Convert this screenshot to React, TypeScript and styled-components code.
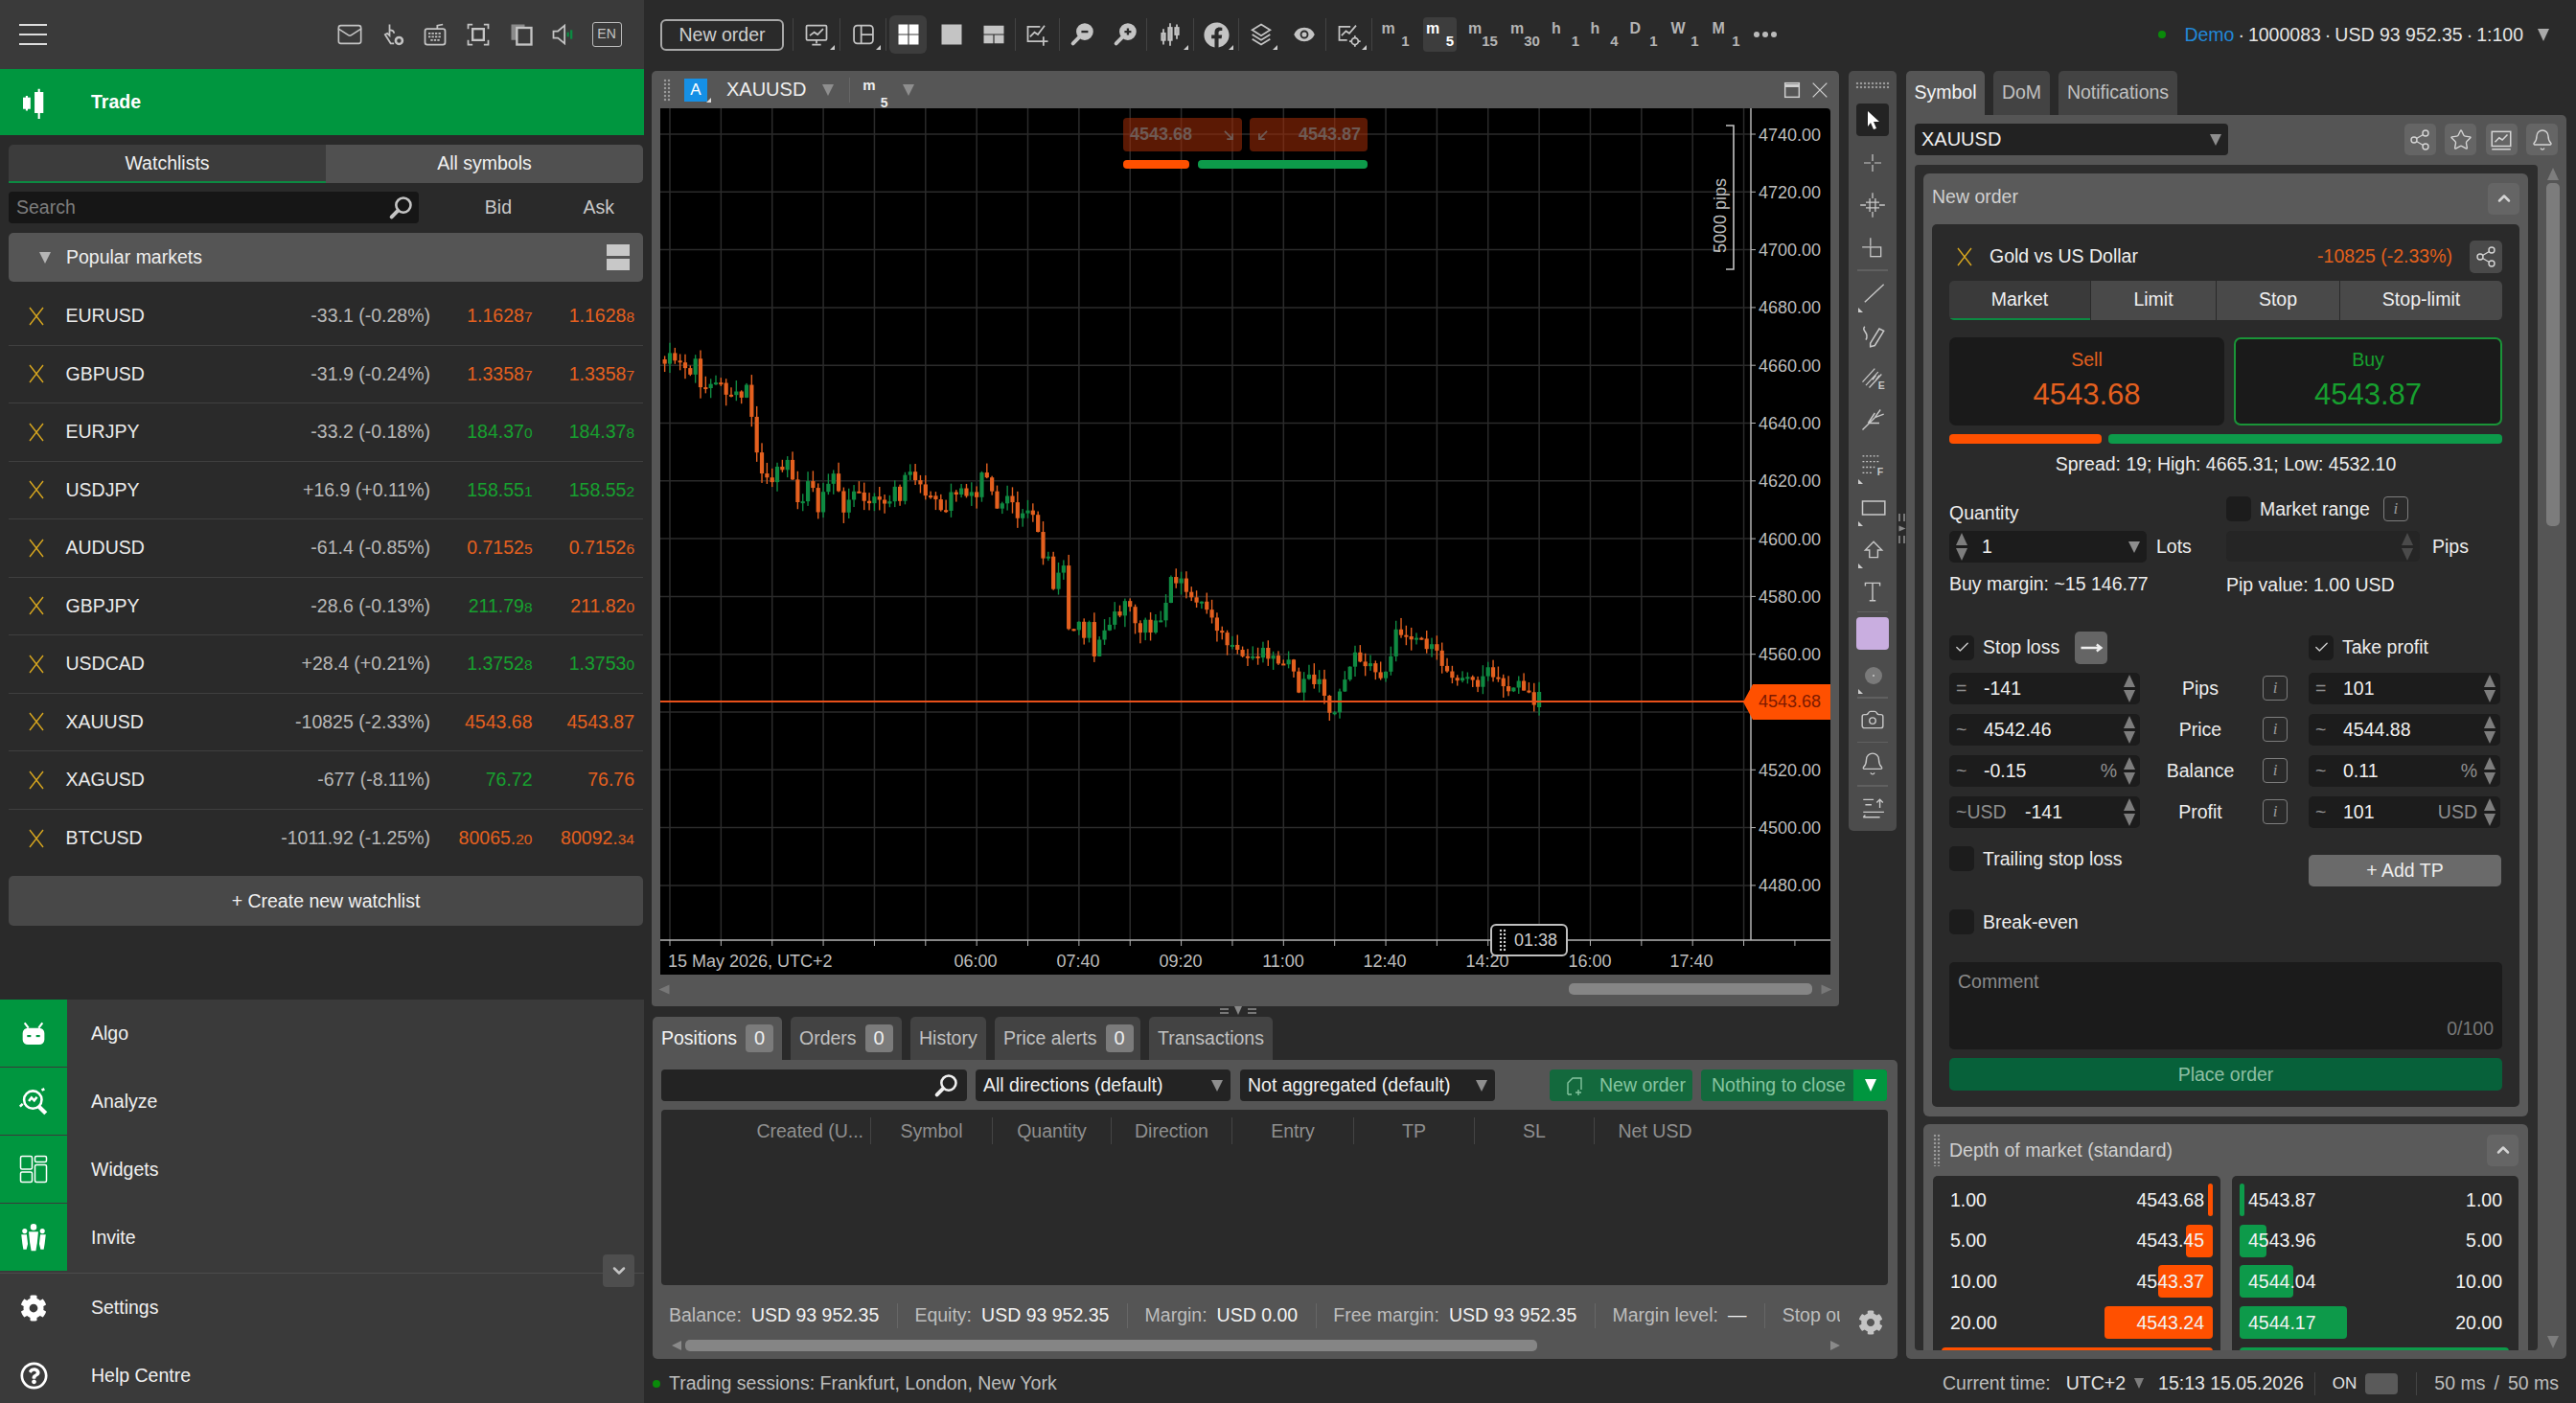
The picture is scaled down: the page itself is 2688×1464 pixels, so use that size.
import React from 'react';
import styled, { createGlobalStyle, css } from 'styled-components';
import { Mail, Share2, Star, Bell, Camera, Eye, ChevronUp, ChevronDown, Check } from 'lucide-react';
import { FaFacebook, FaCog, FaRegQuestionCircle } from 'react-icons/fa';

const Global = createGlobalStyle`
  html, body { margin: 0; padding: 0; background: #2a2a2a; }
  * { box-sizing: border-box; }
  body { font-family: "Liberation Sans", Arial, sans-serif; font-size: 19.5px; color: #e4e4e4; }
`;

/* ---------- primitives ---------- */
const Root = styled.div`
  width: 2688px; height: 1464px; display: flex; overflow: hidden; background: #2a2a2a;
`;
const Ic = styled.svg.attrs<any>((p: any) => ({
  viewBox: '0 0 24 24',
  fill: p.fill ?? 'none',
  stroke: p.stroke ?? 'currentColor',
  strokeWidth: p.strokeWidth ?? 1.5,
  width: p.$s ?? 28,
  height: p.$s ?? 28,
}))<any>`
  display: block; flex: none;
`;
const Tri = styled.i<{ $c?: string; $up?: boolean; $w?: number }>`
  display: block; flex: none; width: 0; height: 0;
  border-left: ${(p) => (p.$w ?? 12) / 2}px solid transparent;
  border-right: ${(p) => (p.$w ?? 12) / 2}px solid transparent;
  ${(p) => (p.$up
    ? css`border-bottom: ${(p.$w ?? 12)}px solid ${p.$c ?? '#858585'};`
    : css`border-top: ${(p.$w ?? 12)}px solid ${p.$c ?? '#858585'};`)}
`;
const Grip = styled.i<{ $w: number; $h: number; $c?: string }>`
  display: block; flex: none; width: ${(p) => p.$w}px; height: ${(p) => p.$h}px;
  background-image: radial-gradient(circle, ${(p) => p.$c ?? '#9a9a9a'} 1.3px, transparent 1.6px);
  background-size: 4px 4px;
`;
const StepBox = styled.div`
  display: flex; flex-direction: column; gap: 3px; align-items: center; flex: none;
`;
const Stepper = ({ dim }: { dim?: boolean }) => (
  <StepBox>
    <Tri $up $w={13} $c={dim ? '#4a4a4a' : '#7d7d7d'} />
    <Tri $w={13} $c={dim ? '#4a4a4a' : '#7d7d7d'} />
  </StepBox>
);
const Cross = () => (
  <Ic $s={24} stroke="#d8a71f" strokeWidth={1.4}><path d="M5 3l14 18M19 3L5 21" /></Ic>
);
const Lens = ({ mark }: { mark?: string }) => (
  <Ic $s={28} strokeWidth={2.2}>
    <circle cx="14.5" cy="9.5" r="6.5" fill={mark ? 'currentColor' : 'none'} />
    <path d="M9.5 14.5L4 20" strokeWidth="3.4" strokeLinecap="round" />
    {mark === '-' && <path d="M11.5 9.5h6" stroke="#2a2a2a" strokeWidth="2" />}
    {mark === '+' && <path d="M11.5 9.5h6M14.5 6.5v6" stroke="#2a2a2a" strokeWidth="2" />}
  </Ic>
);

/* ---------- sidebar ---------- */
const Sidebar = styled.aside`
  width: 672px; flex: none; height: 100%; display: flex; flex-direction: column; background: #2a2a2a; overflow: hidden;
`;
const SideTop = styled.div`
  height: 72px; flex: none; background: #3a3a3a; display: flex; align-items: center; padding: 0 0 0 20px; color: #c4c4c4;
`;
const Hamburger = styled.div`
  width: 29px; height: 22px; margin-right: 293.6px; flex: none; display: flex; flex-direction: column; justify-content: space-between;
  & > i { display: block; height: 2px; background: #ddd; }
`;
const TopIcon = styled.div`
  width: 44.7px; display: flex; justify-content: center; flex: none;
`;
const EnBadge = styled.div`
  border: 1.5px solid #bbb; border-radius: 3px; width: 31px; height: 26px; font-size: 14px; line-height: 23px; text-align: center; color: #c4c4c4;
`;
const TradeBar = styled.div`
  height: 69px; flex: none; background: #00963f; display: flex; align-items: center; color: #fff; font-weight: 700; font-size: 19.5px;
`;
const NavIconCell = styled.div<{ $green?: boolean }>`
  width: 70px; align-self: stretch; flex: none; display: flex; align-items: center; justify-content: center; color: #fff;
  background: ${(p) => (p.$green ? '#00963f' : 'transparent')};
  margin-right: 25px;
`;
const SideTabs = styled.div`
  display: flex; margin: 10px 1px 0 9px; height: 40px; flex: none;
`;
const SideTab = styled.div<{ $active?: boolean }>`
  flex: 1; display: flex; align-items: center; justify-content: center; color: #f0f0f0;
  background: ${(p) => (p.$active ? '#3c3c3c' : '#505050')};
  border-bottom: 2px solid ${(p) => (p.$active ? '#0c8a42' : '#505050')};
  border-radius: ${(p) => (p.$active ? '5px 0 0 0' : '0 5px 5px 0')};
`;
const SearchRow = styled.div`
  display: flex; align-items: center; margin: 9px 0 0 9px; height: 33px; flex: none;
`;
const SearchBox = styled.div`
  width: 428px; height: 33px; background: #161616; border-radius: 4px; display: flex; align-items: center; justify-content: space-between; padding: 0 5px 0 8px; color: #7d7d7d; flex: none;
  & > svg { color: #c4c4c4; }
`;
const ColHead = styled.div<{ $w: number }>`
  width: ${(p) => p.$w}px; text-align: right; color: #c8c8c8; flex: none;
`;
const GroupHead = styled.div`
  margin: 10px 1px 0 9px; height: 51px; flex: none; background: #555; border-radius: 5px; display: flex; align-items: center; padding: 0 14px 0 32px; color: #eee;
`;
const GroupLabel = styled.span`
  margin-left: 16px; flex: 1;
`;
const Collapse2 = styled.div`
  width: 24px; height: 27px; display: flex; flex-direction: column; justify-content: space-between;
  & > i { display: block; height: 12px; background: #c8c8c8; }
`;
const RowList = styled.div`
  margin: 6px 1px 0 9px; flex: none;
`;
const QuoteRow = styled.div`
  height: 60.5px; display: flex; align-items: center; border-bottom: 1.5px solid #3f3f3f; padding-right: 9px;
  &:last-child { border-bottom: none; }
`;
const StarCell = styled.div`
  width: 59.5px; padding-left: 17px; flex: none;
`;
const SymName = styled.div`
  flex: 1; color: #eaeaea;
`;
const ChangeCell = styled.div`
  color: #b8b8b8; text-align: right;
`;
const Rate = styled.div<{ $c: string }>`
  width: 106.5px; flex: none; text-align: right; color: ${(p) => p.$c};
  & > small { font-size: 15.5px; }
`;
const CreateBtn = styled.div`
  margin: 9px 1px 0 9px; height: 52px; flex: none; background: #484848; border-radius: 5px; display: flex; align-items: center; justify-content: center; color: #f0f0f0;
`;
const SideNav = styled.nav`
  margin-top: 77px; position: relative; background: #3a3a3a; flex: none; display: flex; flex-direction: column;
`;
const NavGroup = styled.div`
  display: flex; flex-direction: column; gap: 1px; padding-bottom: 2px; border-bottom: 1px solid #4b4b4b;
`;
const NavRow = styled.div<{ $h: number }>`
  height: ${(p) => p.$h}px; display: flex; align-items: center; color: #f0f0f0; flex: none;
`;
const NavCollapse = styled.div`
  position: absolute; right: 10px; top: 266px; width: 33px; height: 34px; background: #4e4e4e; border-radius: 4px; display: flex; align-items: center; justify-content: center; color: #c4c4c4;
`;

/* ---------- main ---------- */
const Main = styled.main`
  flex: 1; height: 100%; display: flex; flex-direction: column; padding-left: 8px; min-width: 0;
`;
const Toolbar = styled.header`
  height: 74px; flex: none; display: flex; align-items: center; padding: 0 0 2px 9px; color: #c4c4c4;
`;
const NewOrderBtn = styled.div`
  width: 129px; height: 33px; border: 2px solid #a8a8a8; border-radius: 6px; display: flex; align-items: center; justify-content: center; color: #cfcfcf; flex: none; margin-right: 9px;
`;
const VSep = styled.i`
  display: block; flex: none; width: 1px; height: 34px; background: #434343;
`;
const Slot = styled.div<{ $w: number; $active?: boolean }>`
  width: ${(p) => p.$w}px; flex: none; height: 36px; display: flex; align-items: center; justify-content: center; position: relative;
  ${(p) => p.$active && css`
    &::before { content: ''; position: absolute; inset: -2px 3px; background: #3d3d3d; border-radius: 6px; }
    & > * { position: relative; color: #fff; }
  `}
`;
const Corner = styled.i`
  position: absolute; right: 5px; bottom: 2px; width: 0; height: 0; border-left: 5px solid transparent; border-bottom: 5px solid #ccc;
`;
const Tf = styled.div<{ $w: number }>`
  width: ${(p) => p.$w}px; flex: none; display: flex; justify-content: center;
`;
const TfBox = styled.div<{ $active?: boolean }>`
  height: 36px; min-width: 35px; padding: 3px 3px; border-radius: 4px; display: flex; justify-content: space-between; font-weight: 700; font-size: 16px;
  color: ${(p) => (p.$active ? '#fff' : '#b4b4b4')};
  background: ${(p) => (p.$active ? '#3d3d3d' : 'transparent')};
  & > b { line-height: 18px; }
  & > span { align-self: flex-end; line-height: 17px; font-size: 15px; }
`;
const DotsMore = styled.div`
  display: flex; gap: 3px; margin-left: 8px; flex: none;
  & > i { width: 6px; height: 6px; background: #bbb; border-radius: 50%; }
`;
const Account = styled.div`
  margin-left: auto; display: flex; align-items: center; padding-right: 28px; color: #e4e4e4;
`;
const LiveDot = styled.i`
  width: 8px; height: 8px; border-radius: 50%; background: #0a8a0a; margin-right: 19px; flex: none;
`;
const DemoTxt = styled.span`
  color: #2288d8;
`;
const AccSep = styled.span`
  margin: 0 4px;
`;
const AccTri = styled.div`
  margin-left: 15px;
`;

const Work = styled.div`
  height: 1344px; flex: none; display: flex; gap: 9px; padding-right: 10px; position: relative;
`;
const Center = styled.div`
  width: 1300px; flex: none; display: flex; flex-direction: column;
`;
const UpperRow = styled.div`
  height: 976px; flex: none; display: flex; gap: 10px; align-items: flex-start;
`;
const ChartPanel = styled.section`
  width: 1239px; height: 976px; flex: none; background: #565656; border-radius: 5px 5px 4px 4px; display: flex; flex-direction: column; padding: 0 9px 0 9px;
`;
const ChartHead = styled.div`
  height: 39px; flex: none; display: flex; align-items: center; color: #eee; margin-left: -9px; padding-left: 12px;
`;
const ABadge = styled.div`
  width: 24px; height: 24px; background: #1590e6; color: #fff; font-size: 17px; display: flex; align-items: center; justify-content: center; margin-left: 14px; position: relative; flex: none;
  &::after { content: ''; position: absolute; right: -4px; bottom: -1px; border-left: 5px solid transparent; border-bottom: 5px solid #ddd; }
`;
const ChartSym = styled.span`
  margin-left: 20px; font-size: 20px;
`;
const HeadTriBox = styled.div`
  margin-left: 17px;
`;
const HeadSep = styled.i`
  width: 1px; height: 26px; background: #666; margin: 0 13px 0 16px; display: block; flex: none;
`;
const MiniTf = styled.div`
  display: flex; font-weight: 700; font-size: 15px; gap: 5px; margin-right: 15px; height: 30px; justify-content: space-between; color: #eee;
  & > b { line-height: 20px; }
  & > span { align-self: flex-end; line-height: 14px; font-size: 14px; margin-bottom: -5px; }
`;
const HeadRight = styled.div`
  margin-left: auto; display: flex; gap: 7px; align-items: center; color: #cfcfcf;
`;
const ChartArea = styled.div`
  height: 904px; flex: none; background: #000; position: relative; overflow: hidden; border-radius: 0 4px 0 0;
  & > svg { display: block; }
`;
const QuoteOverlay = styled.div`
  position: absolute; left: 483px; top: 10px; width: 255px; display: grid; grid-template-columns: 124px 123px; column-gap: 8px; row-gap: 9px;
`;
const DimQuote = styled.div`
  height: 35px; background: rgba(165, 46, 8, 0.55); border-radius: 4px; display: flex; align-items: center; justify-content: space-between; padding: 0 7px; color: #6e5a54; font-weight: 700; font-size: 18px;
`;
const DimBar = styled.div<{ $c: string; $w?: number }>`
  height: 9px; border-radius: 4px; background: ${(p) => p.$c};
  ${(p) => (p.$w ? `width: ${p.$w}px; flex: none;` : 'flex: 1;')}
`;
const BarsSpan = styled.div`
  grid-column: 1 / 3; display: flex; gap: 9px;
`;
const PriceFlag = styled.div`
  position: absolute; left: 1130px; top: 601px; width: 91px; height: 37px; background: #ff5000; color: #7d1a00; font-size: 18px; display: flex; align-items: center; justify-content: flex-end; padding-right: 10px;
  clip-path: polygon(10px 0, 100% 0, 100% 100%, 10px 100%, 0 50%);
`;
const TimerTag = styled.div`
  position: absolute; left: 866px; top: 851px; width: 81px; height: 34px; background: #000; border: 2px solid #bfbfbf; border-radius: 6px; display: flex; align-items: center; gap: 8px; padding-left: 7px; color: #ccc; font-size: 18px;
`;
const ChartScroll = styled.div`
  height: 33px; flex: none; display: flex; align-items: center; margin: 0 -9px; padding: 0 8px 3px 8px; gap: 6px;
`;
const ThumbTrack = styled.div`
  flex: 1; height: 12px; position: relative;
`;
const HThumb = styled.div`
  position: absolute; top: 0; height: 12px; background: #858585; border-radius: 5px;
`;
const SideArrowL = styled(Tri)`
  transform: rotate(90deg);
`;
const SideArrowR = styled(Tri)`
  transform: rotate(-90deg);
`;

const ToolsCol = styled.div`
  width: 50px; height: 793px; flex: none; background: #4c4c4c; border-radius: 5px; display: flex; flex-direction: column; align-items: center; padding-top: 11px; color: #c8c8c8;
`;
const ToolCell = styled.div<{ $active?: boolean; $h: number; $mt?: number }>`
  width: 34px; height: ${(p) => p.$h}px; margin-top: ${(p) => p.$mt ?? 0}px; display: flex; align-items: center; justify-content: center; flex: none; position: relative;
  ${(p) => p.$active && css`background: #232323; border-radius: 4px; color: #fff;`}
`;
const ToolSep = styled.i`
  width: 32px; height: 1.5px; background: #606060; display: block; flex: none;
`;
const Swatch = styled.div`
  width: 34px; height: 34px; background: #c9aee0; border-radius: 4px;
`;
const ToolCorner = styled.i`
  position: absolute; left: 2px; bottom: 3px; border-right: 5px solid transparent; border-bottom: 5px solid #ccc; width: 0; height: 0;
`;
const SplitHandle = styled.div`
  position: absolute; left: 1300px; top: 462px; width: 9px; display: flex; flex-direction: column; align-items: center; gap: 4px;
  & > u { display: block; width: 7px; height: 8px; border-left: 2px solid #777; border-right: 2px solid #777; }
`;

/* bottom panel */
const BottomWrap = styled.section`
  margin: 11px 0 0 1px; display: flex; flex-direction: column; flex: 1; position: relative;
`;
const Splitter = styled.div`
  position: absolute; left: 592px; top: -11px; display: flex; align-items: center; gap: 6px;
  & > u { width: 9px; height: 6px; display: block; border-top: 2px solid #777; border-bottom: 2px solid #777; }
`;
const BTabs = styled.div`
  display: flex; height: 45px; gap: 9px; flex: none;
`;
const BTab = styled.div<{ $active?: boolean; $w: number }>`
  width: ${(p) => p.$w}px; flex: none; border-radius: 5px 5px 0 0; display: flex; align-items: center; gap: 9px; padding-left: 9px;
  background: ${(p) => (p.$active ? '#555' : '#434343')};
  color: ${(p) => (p.$active ? '#f4f4f4' : '#c0c0c0')};
`;
const Badge = styled.span`
  width: 29px; height: 29px; background: #7b7b7b; border-radius: 4px; display: flex; align-items: center; justify-content: center; color: #eee; font-size: 20px; flex: none;
`;
const BBody = styled.div`
  flex: 1; background: #555; border-radius: 0 5px 5px 5px; padding: 10px 10px 0 9px; display: flex; flex-direction: column;
`;
const FilterRow = styled.div`
  height: 33px; flex: none; display: flex; align-items: center; gap: 9px;
`;
const DarkField = styled.div<{ $w: number; $ml?: number }>`
  width: ${(p) => p.$w}px; margin-left: ${(p) => p.$ml ?? 0}px; height: 33px; background: #232323; border-radius: 4px; display: flex; align-items: center; justify-content: space-between; padding: 0 8px; color: #f0f0f0; flex: none;
`;
const GreenBtn = styled.div<{ $w: number; $ml?: number }>`
  width: ${(p) => p.$w}px; margin-left: ${(p) => p.$ml ?? 0}px; height: 33px; background: #13693d; border-radius: 4px; display: flex; align-items: center; color: #86c5a0; flex: none; overflow: hidden;
`;
const GreenIcon = styled.div`
  margin: 0 14px 0 14px; display: flex;
`;
const GreenLabel = styled.span`
  flex: 1; padding-left: 11px;
`;
const GreenDrop = styled.div`
  width: 35px; align-self: stretch; background: #00963f; display: flex; align-items: center; justify-content: center;
`;
const Table = styled.div`
  margin-top: 9px; height: 183px; flex: none; background: #2a2a2a; border-radius: 4px; padding-top: 4px;
`;
const THead = styled.div`
  display: flex; height: 36px; align-items: center; color: #8f8f8f;
`;
const Th = styled.div<{ $w: number; $right?: boolean; $last?: boolean }>`
  width: ${(p) => p.$w}px; height: 28px; flex: none; display: flex; align-items: center; overflow: hidden;
  justify-content: ${(p) => (p.$right ? 'flex-end' : 'center')}; padding-right: ${(p) => (p.$right ? 7 : 0)}px;
  border-right: ${(p) => (p.$last ? 'none' : '1px solid #444')};
`;
const StatArea = styled.div`
  display: flex; flex: 1;
`;
const StatCol = styled.div`
  width: 1230px; flex: none; display: flex; flex-direction: column;
`;
const StatBar = styled.div`
  height: 35px; margin-top: 14px; display: flex; align-items: center; overflow: hidden; white-space: nowrap; width: 1230px;
`;
const StatItem = styled.div<{ $first?: boolean; $last?: boolean }>`
  display: flex; gap: 10px; align-items: center; flex: none; height: 26px;
  padding: 0 18.7px 0 ${(p) => (p.$first ? 8 : 17.5)}px;
  border-right: ${(p) => (p.$last ? 'none' : '1px solid #666')};
  & > span { color: #bdbdbd; }
  & > b { font-weight: 400; color: #f2f2f2; }
`;
const HScrollRow = styled.div`
  display: flex; align-items: center; margin-top: 7px; height: 13px; gap: 4px; padding-left: 11px;
`;
const GearCol = styled.div`
  flex: 1; color: #c4c4c4; display: flex; justify-content: center; padding-top: 26px; padding-left: 13px;
`;

/* right panel */
const RightCol = styled.section`
  width: 689px; flex: none; display: flex; flex-direction: column;
`;
const RTabs = styled.div`
  display: flex; height: 46px; flex: none; gap: 9px;
`;
const RTab = styled.div<{ $active?: boolean; $w: number }>`
  width: ${(p) => p.$w}px; flex: none; border-radius: 5px 5px 0 0; display: flex; align-items: center; justify-content: center;
  background: ${(p) => (p.$active ? '#555' : '#434343')};
  color: ${(p) => (p.$active ? '#f4f4f4' : '#c0c0c0')};
  padding-bottom: 2px;
`;
const RBody = styled.div`
  flex: 1; background: #555; border-radius: 0 5px 5px 5px; padding: 9px 0 9px 9px; display: flex; flex-direction: column; min-height: 0;
`;
const SelectRow = styled.div`
  display: flex; height: 33px; flex: none; padding-right: 9px; align-items: center;
`;
const SymSelect = styled(DarkField)`
  background: #222; padding: 0 7px; font-size: 20px;
`;
const SquareBtn = styled.div<{ $size?: number; $bg?: string }>`
  width: ${(p) => p.$size ?? 33}px; height: ${(p) => p.$size ?? 33}px; background: ${(p) => p.$bg ?? '#656565'}; border-radius: 5px; display: flex; align-items: center; justify-content: center; color: #d4d4d4; flex: none;
`;
const BtnGroup = styled.div`
  margin-left: auto; display: flex; gap: 9.5px;
`;
const RMain = styled.div`
  flex: 1; margin-top: 10px; display: flex; min-height: 0;
`;
const ScrollPane = styled.div`
  width: 650px; flex: none; background: #2d2d2d; border-radius: 4px; padding: 9px 10px 0 9px; overflow: hidden;
`;
const VBar = styled.div`
  flex: 1; display: flex; flex-direction: column; align-items: center; padding: 3px 0 2px 2px;
`;
const VThumb = styled.div`
  width: 14px; height: 358px; background: #7c7c7c; border-radius: 5px; margin-top: 3px; margin-bottom: auto;
`;
const Section = styled.div`
  background: #5a5a5a; border-radius: 6px; padding: 0 9px 10px 9px;
`;
const SecHead = styled.div`
  height: 52px; display: flex; align-items: center; justify-content: space-between; color: #d0d0d0;
`;
const SecTitle = styled.span`
  margin-bottom: 3px;
`;
const Card = styled.div`
  background: #2a2a2a; border-radius: 5px; padding: 18px 18px 17px 18px; margin-top: 1px;
`;
const GoldRow = styled.div`
  display: flex; align-items: center; height: 33px; color: #f0f0f0; margin-top: -1px;
`;
const GoldCross = styled.div`
  margin-left: 4px; margin-right: 14px; display: flex;
`;
const GoldChange = styled.span`
  margin-left: auto; margin-right: 18px; color: #e2601c;
`;
const OrderTabs = styled.div`
  display: flex; margin-top: 9px; height: 41px; border-radius: 5px; overflow: hidden; gap: 1px;
`;
const OrderTab = styled.div<{ $active?: boolean; $w: number }>`
  width: ${(p) => p.$w}px; flex: none; background: ${(p) => (p.$active ? '#3a3a3a' : '#494949')}; display: flex; align-items: center; justify-content: center; color: #f0f0f0;
  border-bottom: 2px solid ${(p) => (p.$active ? '#0c8a42' : '#494949')};
`;
const QuoteBoxes = styled.div`
  display: flex; gap: 10px; margin-top: 18px;
`;
const QuoteBox = styled.div<{ $c: string; $border?: boolean; $w: number }>`
  width: ${(p) => p.$w}px; height: 92px; flex: none; background: #1a1a1a; border-radius: 7px; display: flex; flex-direction: column; align-items: center; color: ${(p) => p.$c};
  border: 2px solid ${(p) => (p.$border ? '#1a9438' : '#1a1a1a')};
  padding-top: 10px;
  & > b { font-weight: 400; font-size: 31px; line-height: 36px; margin-top: 7px; }
`;
const RatioBars = styled.div`
  display: flex; gap: 7px; margin-top: 9px; height: 10px;
`;
const RatioBar = styled.div<{ $c: string; $w: number }>`
  width: ${(p) => p.$w}px; border-radius: 4px; background: ${(p) => p.$c}; flex: none;
`;
const SpreadLine = styled.div`
  margin-top: 10px; height: 22px; line-height: 22px; text-align: center; color: #ededed;
`;
const QtyGrid = styled.div`
  display: grid; grid-template-columns: 289px 1fr; margin-top: 23px; color: #ededed;
`;
const QtyCol = styled.div`
  display: flex; flex-direction: column;
`;
const Line = styled.div<{ $mt?: number }>`
  height: 22px; line-height: 22px; margin-top: ${(p) => p.$mt ?? 0}px;
`;
const InputRow = styled.div<{ $mt: number }>`
  display: flex; align-items: center; margin-top: ${(p) => p.$mt}px;
`;
const Field = styled.div<{ $w: number; $h?: number; $dim?: boolean }>`
  width: ${(p) => p.$w}px; height: ${(p) => p.$h ?? 33}px; background: ${(p) => (p.$dim ? '#252525' : '#1c1c1c')}; border-radius: 5px; display: flex; align-items: center; padding: 0 7px; flex: none; color: #f0f0f0;
  justify-content: ${(p) => (p.$dim ? 'flex-end' : 'flex-start')};
`;
const QtyValue = styled.span`
  margin-left: 15px; flex: 1;
`;
const UnitLabel = styled.span<{ $ml: number }>`
  margin-left: ${(p) => p.$ml}px;
`;
const CheckBox = styled.div`
  width: 26px; height: 26px; background: #1c1c1c; border-radius: 5px; display: flex; align-items: center; justify-content: center; color: #ccc; flex: none;
`;
const CheckRow = styled.div<{ $mt?: number }>`
  display: flex; align-items: center; gap: 9px; color: #ededed; margin-top: ${(p) => p.$mt ?? 0}px;
`;
const TrailRow = styled(CheckRow)`
  align-self: start;
`;
const InfoBtn = styled.div<{ $ml?: number }>`
  width: 26px; height: 26px; border: 1.5px solid #7d7d7d; border-radius: 4px; color: #9a9a9a; font-family: "Liberation Serif", serif; font-style: italic; font-size: 17px; display: flex; align-items: center; justify-content: center; flex: none; margin-left: ${(p) => p.$ml ?? 0}px;
`;
const SlGrid = styled.div`
  display: grid; grid-template-columns: 199px 176px 200px; row-gap: 10px; margin-top: 37.5px;
`;
const SlHead = styled.div`
  grid-column: 1 / 4; display: grid; grid-template-columns: 375px 200px; height: 34px; margin-bottom: -1px;
`;
const ArrowBtn = styled(SquareBtn)`
  margin-left: 7px; height: 34px; width: 34px; color: #eee;
`;
const SlField = styled(Field)`
  padding: 0 5px 0 7px; width: 100%;
`;
const SlPrefix = styled.span<{ $w?: number }>`
  width: ${(p) => p.$w ?? 29}px; flex: none; color: #8f8f8f;
`;
const SlValue = styled.span`
  flex: 1;
`;
const SlUnit = styled.span`
  color: #8f8f8f; margin-right: 7px;
`;
const MidCell = styled.div`
  display: flex; align-items: center; color: #ededed;
`;
const MidLabel = styled.div`
  width: 126px; text-align: center;
`;
const TrailGrid = styled.div`
  display: grid; grid-template-columns: 375px 201px; margin-top: 19.5px;
`;
const AddTp = styled.div`
  height: 33px; margin-top: 9px; background: #6a6a6a; border-radius: 5px; display: flex; align-items: center; justify-content: center; color: #eee;
`;
const CommentBox = styled.div`
  margin-top: 29px; height: 91px; background: #1b1b1b; border-radius: 5px; padding: 9px; color: #8a8a8a; display: flex; flex-direction: column; justify-content: space-between;
`;
const CommentCount = styled.div`
  text-align: right; color: #777; margin-bottom: 1px;
`;
const PlaceBtn = styled.div`
  margin-top: 9px; height: 34px; background: #07613a; border-radius: 5px; display: flex; align-items: center; justify-content: center; color: #8ebfa3;
`;
const DomSection = styled(Section)`
  margin-top: 8px; padding: 0 10px 0 10px;
`;
const DomHead = styled(SecHead)`
  height: 54px; justify-content: flex-start; gap: 9px;
`;
const DomBtn = styled(SquareBtn)`
  margin-left: auto;
`;
const DomGrid = styled.div`
  display: grid; grid-template-columns: 300px 299px; column-gap: 12px;
`;
const DomPanel = styled.div`
  background: #2a2a2a; border-radius: 5px 5px 0 0; padding: 8px 8px 40px; display: flex; flex-direction: column; gap: 8.7px;
`;
const DomRow = styled.div<{ $pl?: number }>`
  height: 34px; position: relative; display: flex; align-items: center; justify-content: space-between; padding: 0 9px 0 ${(p) => p.$pl ?? 10}px; color: #f2f2f2; flex: none;
  & > span { position: relative; }
`;
const DomFill = styled.div<{ $side: 'l' | 'r'; $w: number; $c: string }>`
  position: absolute; top: 0; bottom: 0; width: ${(p) => p.$w}px; background: ${(p) => p.$c}; border-radius: 4px;
  ${(p) => (p.$side === 'l' ? 'right: 0;' : 'left: 0;')}
`;

/* footer */
const Footer = styled.footer`
  height: 46px; flex: none; display: flex; align-items: center; color: #bdbdbd; padding: 5px 18px 0 0;
`;
const FootDot = styled.i`
  width: 8px; height: 8px; background: #0a8a0a; border-radius: 50%; margin: 0 9px 0 1px; display: block; flex: none;
`;
const FootRight = styled.div`
  margin-left: auto; display: flex; align-items: center;
`;
const Utc = styled.span`
  margin-left: 16px; color: #e4e4e4;
`;
const UtcTri = styled.div`
  margin: 0 15px 0 9px;
`;
const FootTime = styled.span`
  color: #e4e4e4;
`;
const FootSep = styled.i`
  width: 1px; height: 24px; background: #444; display: block; margin: 0 18px 0 11px;
`;
const OnLabel = styled.span`
  color: #e4e4e4; font-size: 17px; margin-right: 9px;
`;
const Toggle = styled.div`
  width: 34px; height: 22px; background: #5a5a5a; border-radius: 4px; margin-right: 8px;
`;
const MsSlash = styled.span`
  margin: 0 9px;
`;

/* ---------- chart data ---------- */
const z10: number[][] = [[30,105],[60,100],[90,125],[112,150],[130,110],[143,200],[157,195],[172,165],[187,165],[202,190],[232,205],[262,210],[276,180],[290,260],[305,395],[320,450],[335,470],[350,490],[365,440],[380,470],[395,420],[410,470],[425,570],[440,570],[455,490],[470,480],[485,580],[500,530],[515,500],[530,470],[545,510],[560,570],[575,530],[605,510],[620,545],[650,535],[665,555],[680,550],[695,540],[710,510],[725,550],[740,480],[755,470],[770,490],[785,510],[815,530],[860,580],[875,530],[890,535],[905,520],[920,545],[950,525],[965,475],[980,490],[995,535],[1010,570],[1025,565],[1040,535],[1055,560],[1070,610],[1085,585],[1100,590],[1115,610],[1130,660],[1145,730],[1160,735],[1175,825],[1190,780],[1203,760],[1218,940],[1233,955],[1248,940],[1265,990],[1278,940],[1293,1040],[1307,985],[1322,960],[1340,935],[1355,870],[1370,900],[1385,870],[1400,880],[1412,920],[1425,960],[1440,905],[1457,945],[1472,935],[1487,940],[1500,880],[1516,795],[1532,790]];
const z11: number[][] = [[99,80],[112,130],[130,130],[160,180],[185,260],[210,310],[240,320],[265,290],[290,330],[310,320],[335,420],[350,380],[375,390],[395,480],[410,480],[435,340],[450,310],[480,350],[495,380],[510,350],[530,240],[550,240],[580,260],[610,310],[630,360],[660,380],[690,400],[710,360],[750,420],[775,390],[800,460],[815,456]];
const wp = [
  ...z10.map(([x, y]) => [680 + x / 2.8, 340 + y / 3]),
  ...z11.map(([x, y]) => [1180 + x / 1.912, 580 + y / 3]),
].filter((p, i, a) => i === 0 || p[0] > a[i - 1][0]);
const yAt = (x: number) => {
  for (let i = 1; i < wp.length; i++) {
    if (x <= wp[i][0]) {
      const [a, b] = [wp[i - 1], wp[i]];
      return a[1] + (b[1] - a[1]) * Math.max(0, (x - a[0]) / (b[0] - a[0]));
    }
  }
  return wp[wp.length - 1][1];
};
const rnd = (n: number) => { const v = Math.sin(n * 12.9898) * 43758.5453; return v - Math.floor(v); };
const candles = (() => {
  const out: { x: number; o: number; c: number; h: number; l: number }[] = [];
  let prev = yAt(688);
  for (let i = 1; i <= 172; i++) {
    const x = 688.3 + 5.336 * i;
    const c = i === 172 ? 722 : yAt(x) + (rnd(i) - 0.5) * 12;
    const o = i === 172 ? 738 : prev;
    out.push({ x, o, c, h: Math.min(o, c) - rnd(i + 300) * 12, l: Math.max(o, c) + rnd(i + 700) * 12 });
    prev = c;
  }
  return out;
})();
const PRICES = [4740, 4720, 4700, 4680, 4660, 4640, 4620, 4600, 4580, 4560, 4520, 4500, 4480];
const priceY = (p: number) => 140 + (4740 - p) * 3.015;
const TIMES: [string, number][] = [['06:00', 1018], ['07:40', 1125], ['09:20', 1232], ['11:00', 1339], ['12:40', 1445], ['14:20', 1552], ['16:00', 1659], ['17:40', 1765]];

const ChartSvg = () => (
  <svg width="1221" height="904" viewBox="689 113 1221 904" fontFamily="Liberation Sans, Arial, sans-serif">
    {Array.from({ length: 23 }, (_, i) => 699 + 53.36 * i).map((x) => (
      <line key={x} x1={x} x2={x} y1={113} y2={981} stroke={x > 1827 ? '#000' : '#2b2b2b'} strokeWidth="1.5" />
    ))}
    {[...PRICES, 4540].map((p) => (
      <line key={p} x1={689} x2={1827} y1={priceY(p)} y2={priceY(p)} stroke="#2b2b2b" strokeWidth="1.5" />
    ))}
    {candles.map((k, i) => {
      const up = k.c < k.o;
      const col = up ? '#0f8a42' : '#e4601f';
      return (
        <g key={i} fill={col}>
          <rect x={k.x - 0.7} y={k.h} width={1.4} height={k.l - k.h} />
          <rect x={k.x - 2.1} y={Math.min(k.o, k.c)} width={4.2} height={Math.max(2, Math.abs(k.o - k.c))} />
        </g>
      );
    })}
    <line x1={689} x2={1822} y1={732} y2={732} stroke="#e8501a" strokeWidth="1.8" />
    <line x1={1827} x2={1827} y1={113} y2={981} stroke="#b5b5b5" strokeWidth="1.5" />
    <line x1={689} x2={1910} y1={981} y2={981} stroke="#b5b5b5" strokeWidth="1.5" />
    {PRICES.map((p) => (
      <g key={p}>
        <line x1={1827} x2={1832} y1={priceY(p)} y2={priceY(p)} stroke="#b5b5b5" />
        <text x={1835} y={priceY(p) + 6.5} fontSize="18" fill="#bdbdbd">{p}.00</text>
      </g>
    ))}
    {Array.from({ length: 23 }, (_, i) => 699 + 53.36 * i).map((x) => (
      <line key={x} x1={x} x2={x} y1={981} y2={987} stroke="#b5b5b5" />
    ))}
    {TIMES.map(([t, x]) => (
      <text key={t} x={x} y={1009} fontSize="18" fill="#bdbdbd" textAnchor="middle">{t}</text>
    ))}
    <text x={697} y={1009} fontSize="18" fill="#bdbdbd">15 May 2026, UTC+2</text>
    <path d="M1801 131h8v150h-8" stroke="#c4c4c4" strokeWidth="1.6" fill="none" />
    <text transform="rotate(-90 1801 225)" x={1801} y={225} fontSize="18" fill="#bdbdbd" textAnchor="middle">5000 pips</text>
  </svg>
);

/* ---------- icons ---------- */
const TB = {
  monitor: <Ic><rect x="3" y="4" width="18" height="13" rx="1" /><path d="M6 13l4-3 3 2 5-5M12 17v3M8 21h8" /></Ic>,
  layout: <Ic><rect x="3.5" y="4" width="17" height="16" rx="3" /><path d="M10 4v16M10 12h10.5" /></Ic>,
  quad: <Ic stroke="none" fill="currentColor"><path d="M3 3h8.5v8.5H3zM12.5 3H21v8.5h-8.5zM3 12.5h8.5V21H3zM12.5 12.5H21V21h-8.5z" /></Ic>,
  single: <Ic stroke="none" fill="currentColor"><path d="M3 3h18v18H3z" /></Ic>,
  triple: <Ic stroke="none" fill="currentColor"><path d="M3 4h18v7.5H3zM3 12.5h8.5V20H3zM12.5 12.5H21V20h-8.5z" /></Ic>,
  chartAdd: <Ic><path d="M14 5H3v13h10M5 14l4-4 3 2 6-8M17 14v8M13 18h8" /></Ic>,
  candles: <Ic><path d="M6 7v14M12 2v20M18 3v13" /><rect x="4.5" y="11" width="3" height="6" /><rect x="10.5" y="6" width="3" height="11" /><rect x="16.5" y="6" width="3" height="6" /></Ic>,
  layers: <Ic><path d="M12 3l8 5-8 5-8-5zM4 12l8 5 8-5M4 16l8 5 8-5" /></Ic>,
  chartGear: <Ic><path d="M13 5H3v12h7M5 13l4-4 3 2 6-7" /><circle cx="17" cy="18" r="3" /><path d="M17 13v2M17 21v2M12 18h2M20 18h2" /></Ic>,
  hand: <Ic><path d="M9 3v10l-2-2-2 1 5 8h3" /><path d="M9 8c3 0 4 1 4 3" /><circle cx="17.5" cy="17.5" r="3" strokeWidth="2.2" /></Ic>,
  kbd: <Ic><rect x="3" y="7" width="18" height="14" rx="2" /><path d="M6 11h12M6 14h12M8 17h8" strokeDasharray="2 1" /><path d="M14 7V4l5-1" /></Ic>,
  full: <Ic><path d="M3 7V3h4M17 3h4v4M3 17v4h4M17 21h4v-4" /><rect x="7" y="7" width="10" height="10" strokeWidth="2" /></Ic>,
  copy: <Ic><path d="M3 3h12v3H8v11H3z" fill="#8a8a8a" stroke="none" /><rect x="8" y="6" width="13" height="15" strokeWidth="2" /></Ic>,
  sound: <Ic><path d="M3 9v6h4l6 5V4L7 9z" /><path d="M16 10v4" stroke="#0c8a42" strokeWidth="2" /><path d="M19 8v8" stroke="#0c8a42" strokeWidth="2" /></Ic>,
};
const Tool = {
  cross: <Ic $s={24} strokeWidth={1.2}><path d="M12 3v7M12 14v7M3 12h7M14 12h7" /></Ic>,
  cross2: <Ic $s={28} strokeWidth={1.1}><path d="M9.5 6v12M14.5 6v12M6 9.5h12M6 14.5h12M12 1v5M12 18v5M1 12h5M18 12h5" /></Ic>,
  crop: <Ic $s={26} strokeWidth={1.2}><path d="M10 2v8M2 11h8" /><rect x="10" y="11" width="10" height="9" /></Ic>,
  line: <Ic $s={28} strokeWidth={1.2}><path d="M5 20L22 4" /></Ic>,
  pen: <Ic $s={28} strokeWidth={1.3}><path d="M5 4c-4 4 5 5 1 12M10 19l8-13 4 2-8 13-4 1z" /></Ic>,
  fib: <Ic $s={28} strokeWidth={1.1}><path d="M3 16L14 4M6 19L17 7M9 21L20 9M12 14l3-4M15 14l3-4" /><text x="17" y="22" fontSize="9" fill="currentColor" stroke="none" fontWeight="700">E</text></Ic>,
  fork: <Ic $s={28} strokeWidth={1.2}><path d="M3 21L14 10M14 10l5-7M14 10l8-3M8 15l6-9M8 15l10 0" /></Ic>,
  fibF: <Ic $s={28} strokeWidth={1.2}><path d="M3 5h16M3 10h16M3 15h11M3 20h8" strokeDasharray="1.6 1.6" /><text x="16" y="22" fontSize="9" fill="currentColor" stroke="none" fontWeight="700">F</text></Ic>,
  rect: <Ic $s={28} strokeWidth={1.3}><rect x="3" y="6" width="20" height="12" /></Ic>,
  arrow: <Ic $s={26} strokeWidth={1.3}><path d="M13 4l8 8h-4v7H9v-7H5z" /></Ic>,
  text: <Ic $s={26} strokeWidth={1.3}><path d="M5 7V4h14v3M12 4v17M9 21h6" /></Ic>,
  circle: <Ic $s={24} stroke="none"><circle cx="13" cy="12" r="9" fill="#7a7a7a" /><circle cx="13" cy="12" r="1" fill="#ccc" /></Ic>,
  orders: <Ic $s={26} strokeWidth={1.3}><path d="M3 4h10M5 9h6M19 12V5M16 7l3-3 3 3M3 16h20M3 21h16M3 21l2-2" /></Ic>,
};
const Pointer = () => (
  <Ic $s={24} fill="#fff" stroke="none"><path d="M7 3l12 11h-6l3 7-3 1-3-7-3 4z" /></Ic>
);
const ROW = (n: string, ch: string, b: React.ReactNode, bc: string, a: React.ReactNode, ac: string) => ({ n, ch, b, bc, a, ac });
const RED = '#e4601f', GRN = '#17a02f';
const Q = (m: string, s: string) => <>{m}<small>{s}</small></>;
const QUOTES = [
  ROW('EURUSD', '-33.1 (-0.28%)', Q('1.1628', '7'), RED, Q('1.1628', '8'), RED),
  ROW('GBPUSD', '-31.9 (-0.24%)', Q('1.3358', '7'), RED, Q('1.3358', '7'), RED),
  ROW('EURJPY', '-33.2 (-0.18%)', Q('184.37', '0'), GRN, Q('184.37', '8'), GRN),
  ROW('USDJPY', '+16.9 (+0.11%)', Q('158.55', '1'), GRN, Q('158.55', '2'), GRN),
  ROW('AUDUSD', '-61.4 (-0.85%)', Q('0.7152', '5'), RED, Q('0.7152', '6'), RED),
  ROW('GBPJPY', '-28.6 (-0.13%)', Q('211.79', '8'), GRN, Q('211.82', '0'), RED),
  ROW('USDCAD', '+28.4 (+0.21%)', Q('1.3752', '8'), GRN, Q('1.3753', '0'), GRN),
  ROW('XAUUSD', '-10825 (-2.33%)', '4543.68', RED, '4543.87', RED),
  ROW('XAGUSD', '-677 (-8.11%)', '76.72', GRN, '76.76', RED),
  ROW('BTCUSD', '-1011.92 (-1.25%)', Q('80065.', '20'), RED, Q('80092.', '34'), RED),
];

const NAV: [string, React.ReactNode][] = [
  ['Algo', <Ic $s={32} stroke="none" fill="#fff" key="a"><path d="M5 4l3 4M19 4l-3 4" stroke="#fff" strokeWidth="1.6" /><rect x="3.5" y="8" width="17" height="13" rx="4" /><rect x="7" y="13.5" width="3" height="1.6" fill="#00963f" /><rect x="14" y="13.5" width="3" height="1.6" fill="#00963f" /></Ic>],
  ['Analyze', <Ic $s={34} strokeWidth={1.8} stroke="#fff" key="b"><circle cx="11.5" cy="11" r="6.5" /><path d="M16 16l5 5" strokeWidth="3" /><path d="M8.5 12l2-2.5 2 2 2-2.5M2 16l2-2M18 4l2-1" /></Ic>],
  ['Widgets', <Ic $s={36} strokeWidth={1} stroke="#fff" key="c"><rect x="3" y="3" width="8" height="9" rx="1" /><rect x="13" y="3" width="8" height="4" rx="1" /><rect x="3" y="14" width="8" height="7" rx="1" /><rect x="13" y="9" width="8" height="12" rx="1" /></Ic>],
  ['Invite', <Ic $s={34} stroke="none" fill="#fff" key="d"><circle cx="12" cy="4.5" r="2.3" /><path d="M8.5 8h7l-.8 8-1 6h-3.4l-1-6z" /><circle cx="5.5" cy="7.5" r="1.8" /><circle cx="18.5" cy="7.5" r="1.8" /><path d="M3 10h4l.8 7-1 4H4.5l-.7-4zM17 10h4l-.8 7-.7 4h-2.3l-1-4z" /></Ic>],
];

const SL_ROWS = [
  ['=', '-141', '', 'Pips', '=', '101', ''],
  ['~', '4542.46', '', 'Price', '~', '4544.88', ''],
  ['~', '-0.15', '%', 'Balance', '~', '0.11', '%'],
  ['~USD', '-141', '', 'Profit', '~', '101', 'USD'],
];
const DOM = [
  ['1.00', '4543.68', 5, '4543.87', 5],
  ['5.00', '4543.45', 28, '4543.96', 28],
  ['10.00', '4543.37', 57, '4544.04', 56],
  ['20.00', '4543.24', 113, '4544.17', 112],
] as const;
const TH: [string, number][] = [['Symbol', 127], ['Quantity', 124], ['Direction', 126], ['Entry', 127], ['TP', 126], ['SL', 125]];
const TFS: [string, string, number][] = [['m', '1', 48], ['m', '5', 45], ['m', '15', 45], ['m', '30', 43], ['h', '1', 41], ['h', '4', 40], ['D', '1', 42], ['W', '1', 44], ['M', '1', 42]];

export default function App() {
  return (
    <Root>
      <Global />
      <Sidebar>
        <SideTop>
          <Hamburger><i /><i /><i /></Hamburger>
          <TopIcon><Mail size={28} strokeWidth={1.4} /></TopIcon>
          <TopIcon>{TB.hand}</TopIcon>
          <TopIcon>{TB.kbd}</TopIcon>
          <TopIcon>{TB.full}</TopIcon>
          <TopIcon>{TB.copy}</TopIcon>
          <TopIcon>{TB.sound}</TopIcon>
          <TopIcon><EnBadge>EN</EnBadge></TopIcon>
        </SideTop>
        <TradeBar>
          <NavIconCell>
            <Ic $s={34} stroke="#fff" fill="#fff"><path d="M7 7v11M16 2v22" /><rect x="5" y="9" width="4" height="7" /><rect x="13.5" y="5" width="5" height="14" /></Ic>
          </NavIconCell>
          Trade
        </TradeBar>
        <SideTabs>
          <SideTab $active>Watchlists</SideTab>
          <SideTab>All symbols</SideTab>
        </SideTabs>
        <SearchRow>
          <SearchBox>Search<Lens /></SearchBox>
          <ColHead $w={97}>Bid</ColHead>
          <ColHead $w={107}>Ask</ColHead>
        </SearchRow>
        <GroupHead>
          <Tri $w={12} $c="#b5b5b5" />
          <GroupLabel>Popular markets</GroupLabel>
          <Collapse2><i /><i /></Collapse2>
        </GroupHead>
        <RowList>
          {QUOTES.map((q) => (
            <QuoteRow key={q.n}>
              <StarCell><Cross /></StarCell>
              <SymName>{q.n}</SymName>
              <ChangeCell>{q.ch}</ChangeCell>
              <Rate $c={q.bc}>{q.b}</Rate>
              <Rate $c={q.ac}>{q.a}</Rate>
            </QuoteRow>
          ))}
        </RowList>
        <CreateBtn>+ Create new watchlist</CreateBtn>
        <SideNav>
          <NavGroup>
            {NAV.map(([label, icon]) => (
              <NavRow key={label} $h={70}>
                <NavIconCell $green>{icon}</NavIconCell>
                {label}
              </NavRow>
            ))}
          </NavGroup>
          <NavRow $h={71}>
            <NavIconCell><FaCog size={28} /></NavIconCell>
            Settings
          </NavRow>
          <NavRow $h={71}>
            <NavIconCell><FaRegQuestionCircle size={29} /></NavIconCell>
            Help Centre
          </NavRow>
          <NavCollapse><ChevronDown size={20} strokeWidth={3} /></NavCollapse>
        </SideNav>
      </Sidebar>

      <Main>
        <Toolbar>
          <NewOrderBtn>New order</NewOrderBtn>
          <VSep />
          <Slot $w={48}>{TB.monitor}<Corner /></Slot><VSep />
          <Slot $w={47}>{TB.layout}<Corner /></Slot><VSep />
          <Slot $w={45} $active>{TB.quad}</Slot>
          <Slot $w={45}>{TB.single}</Slot>
          <Slot $w={44}>{TB.triple}</Slot><VSep />
          <Slot $w={45}>{TB.chartAdd}</Slot><VSep />
          <Slot $w={45}><Lens mark="-" /></Slot>
          <Slot $w={45}><Lens mark="+" /></Slot><VSep />
          <Slot $w={48}>{TB.candles}<Corner /></Slot><VSep />
          <Slot $w={46}><FaFacebook size={27} /><Corner /></Slot><VSep />
          <Slot $w={45}>{TB.layers}<Corner /></Slot>
          <Slot $w={45}><Eye size={28} fill="#c4c4c4" stroke="#2a2a2a" strokeWidth={1.6} /></Slot><VSep />
          <Slot $w={47}>{TB.chartGear}<Corner /></Slot><VSep />
          {TFS.map(([a, b, w], i) => (
            <Tf $w={w} key={a + b}>
              <TfBox $active={i === 1}><b>{a}</b><span>{b}</span></TfBox>
            </Tf>
          ))}
          <DotsMore><i /><i /><i /></DotsMore>
          <Account>
            <LiveDot />
            <DemoTxt>Demo</DemoTxt><AccSep>·</AccSep>1000083<AccSep>·</AccSep>USD 93 952.35<AccSep>·</AccSep>1:100
            <AccTri><Tri $w={13} $c="#aaa" /></AccTri>
          </Account>
        </Toolbar>

        <Work>
          <Center>
            <UpperRow>
              <ChartPanel>
                <ChartHead>
                  <Grip $w={8} $h={24} />
                  <ABadge>A</ABadge>
                  <ChartSym>XAUUSD</ChartSym>
                  <HeadTriBox><Tri $w={12} $c="#8e8e8e" /></HeadTriBox>
                  <HeadSep />
                  <MiniTf><b>m</b><span>5</span></MiniTf>
                  <Tri $w={12} $c="#8e8e8e" />
                  <HeadRight>
                    <Ic $s={22} strokeWidth={1.6}><rect x="4" y="4" width="16" height="16" /><path d="M4 7h16" strokeWidth="3.5" /></Ic>
                    <Ic $s={22} strokeWidth={1.4}><path d="M4 4l16 16M20 4L4 20" /></Ic>
                  </HeadRight>
                </ChartHead>
                <ChartArea>
                  <ChartSvg />
                  <QuoteOverlay>
                    <DimQuote>4543.68<Ic $s={14} strokeWidth={3}><path d="M5 5l14 14M19 9v10H9" /></Ic></DimQuote>
                    <DimQuote><Ic $s={14} strokeWidth={3}><path d="M19 5L5 19M5 9v10h10" /></Ic>4543.87</DimQuote>
                    <BarsSpan>
                      <DimBar $c="#ff5000" $w={69} />
                      <DimBar $c="#0d9a4a" />
                    </BarsSpan>
                  </QuoteOverlay>
                  <PriceFlag>4543.68</PriceFlag>
                  <TimerTag><Grip $w={8} $h={24} $c="#d0d0d0" />01:38</TimerTag>
                </ChartArea>
                <ChartScroll>
                  <SideArrowL $w={11} $c="#777" />
                  <ThumbTrack><HThumb style={{ left: 933, width: 254 }} /></ThumbTrack>
                  <SideArrowR $w={11} $c="#777" />
                </ChartScroll>
              </ChartPanel>
              <ToolsCol>
                <Grip $w={36} $h={8} />
                <ToolCell $h={34} $active $mt={15}><Pointer /></ToolCell>
                <ToolCell $h={44} $mt={6}>{Tool.cross}</ToolCell>
                <ToolCell $h={44}>{Tool.cross2}</ToolCell>
                <ToolCell $h={45}>{Tool.crop}</ToolCell>
                <ToolSep />
                <ToolCell $h={46}>{Tool.line}<ToolCorner /></ToolCell>
                <ToolCell $h={43}>{Tool.pen}</ToolCell>
                <ToolCell $h={44}>{Tool.fib}</ToolCell>
                <ToolCell $h={45}>{Tool.fork}</ToolCell>
                <ToolCell $h={47}>{Tool.fibF}<ToolCorner /></ToolCell>
                <ToolCell $h={44}>{Tool.rect}<ToolCorner /></ToolCell>
                <ToolCell $h={44}>{Tool.arrow}<ToolCorner /></ToolCell>
                <ToolCell $h={42}>{Tool.text}</ToolCell>
                <ToolSep />
                <ToolCell $h={44}><Swatch /></ToolCell>
                <ToolCell $h={44}>{Tool.circle}<ToolCorner /></ToolCell>
                <ToolSep />
                <ToolCell $h={45}><Camera size={26} strokeWidth={1.3} /></ToolCell>
                <ToolSep />
                <ToolCell $h={44}><Bell size={26} strokeWidth={1.3} /></ToolCell>
                <ToolSep />
                <ToolCell $h={44}>{Tool.orders}</ToolCell>
              </ToolsCol>
            </UpperRow>
            <BottomWrap>
              <Splitter><u /><Tri $w={9} $c="#888" /><u /></Splitter>
              <BTabs>
                <BTab $active $w={135}>Positions<Badge>0</Badge></BTab>
                <BTab $w={116}>Orders<Badge>0</Badge></BTab>
                <BTab $w={79}>History</BTab>
                <BTab $w={152}>Price alerts<Badge>0</Badge></BTab>
                <BTab $w={129}>Transactions</BTab>
              </BTabs>
              <BBody>
                <FilterRow>
                  <DarkField $w={319}><span /><Lens /></DarkField>
                  <DarkField $w={266}>All directions (default)<Tri $c="#8e8e8e" /></DarkField>
                  <DarkField $w={266} $ml={1}>Not aggregated (default)<Tri $c="#8e8e8e" /></DarkField>
                  <GreenBtn $w={149} $ml={48}>
                    <GreenIcon><Ic $s={24} stroke="#86c5a0" strokeWidth={1.4}><path d="M5 21V9l5-5h9v12M13 19h6M16 16v6M5 21h4" /></Ic></GreenIcon>
                    New order
                  </GreenBtn>
                  <GreenBtn $w={194}>
                    <GreenLabel>Nothing to close</GreenLabel>
                    <GreenDrop><Tri $w={13} $c="#fff" /></GreenDrop>
                  </GreenBtn>
                </FilterRow>
                <Table>
                  <THead>
                    <Th $w={219} $right>Created (U...</Th>
                    {TH.map(([t, w]) => <Th $w={w} key={t}>{t}</Th>)}
                    <Th $w={126} $last>Net USD</Th>
                  </THead>
                </Table>
                <StatArea>
                  <StatCol>
                    <StatBar>
                      <StatItem $first><span>Balance:</span><b>USD 93 952.35</b></StatItem>
                      <StatItem><span>Equity:</span><b>USD 93 952.35</b></StatItem>
                      <StatItem><span>Margin:</span><b>USD 0.00</b></StatItem>
                      <StatItem><span>Free margin:</span><b>USD 93 952.35</b></StatItem>
                      <StatItem><span>Margin level:</span><b>—</b></StatItem>
                      <StatItem $last><span>Stop out level:</span></StatItem>
                    </StatBar>
                    <HScrollRow>
                      <SideArrowL $w={10} $c="#8a8a8a" />
                      <ThumbTrack><HThumb style={{ left: 0, width: 889 }} /></ThumbTrack>
                      <SideArrowR $w={10} $c="#8a8a8a" />
                    </HScrollRow>
                  </StatCol>
                  <GearCol><FaCog size={26} /></GearCol>
                </StatArea>
              </BBody>
            </BottomWrap>
          </Center>

          <RightCol>
            <RTabs>
              <RTab $active $w={82}>Symbol</RTab>
              <RTab $w={59}>DoM</RTab>
              <RTab $w={124}>Notifications</RTab>
            </RTabs>
            <RBody>
              <SelectRow>
                <SymSelect $w={327}>XAUUSD<Tri $c="#8e8e8e" /></SymSelect>
                <BtnGroup>
                  <SquareBtn><Share2 size={24} strokeWidth={1.4} /></SquareBtn>
                  <SquareBtn><Star size={24} strokeWidth={1.4} /></SquareBtn>
                  <SquareBtn><Ic $s={26} strokeWidth={1.4}><rect x="3" y="4" width="18" height="14" /><path d="M6 14l4-4 3 2 5-5M3 21h18" /></Ic></SquareBtn>
                  <SquareBtn><Bell size={24} strokeWidth={1.4} /></SquareBtn>
                </BtnGroup>
              </SelectRow>
              <RMain>
                <ScrollPane>
                  <Section>
                    <SecHead>
                      <SecTitle>New order</SecTitle>
                      <SquareBtn><ChevronUp size={20} strokeWidth={3} /></SquareBtn>
                    </SecHead>
                    <Card>
                      <GoldRow>
                        <GoldCross><Cross /></GoldCross>
                        Gold vs US Dollar
                        <GoldChange>-10825 (-2.33%)</GoldChange>
                        <SquareBtn $size={34} $bg="#4a4a4a"><Share2 size={24} strokeWidth={1.4} /></SquareBtn>
                      </GoldRow>
                      <OrderTabs>
                        <OrderTab $active $w={147}>Market</OrderTab>
                        <OrderTab $w={130}>Limit</OrderTab>
                        <OrderTab $w={128}>Stop</OrderTab>
                        <OrderTab $w={169}>Stop-limit</OrderTab>
                      </OrderTabs>
                      <QuoteBoxes>
                        <QuoteBox $c="#e4601f" $w={287}>Sell<b>4543.68</b></QuoteBox>
                        <QuoteBox $c="#17a02f" $border $w={280}>Buy<b>4543.87</b></QuoteBox>
                      </QuoteBoxes>
                      <RatioBars>
                        <RatioBar $c="#ff5000" $w={159} />
                        <RatioBar $c="#0d9a4a" $w={411} />
                      </RatioBars>
                      <SpreadLine>Spread: 19; High: 4665.31; Low: 4532.10</SpreadLine>
                      <QtyGrid>
                        <QtyCol>
                          <Line $mt={6}>Quantity</Line>
                          <InputRow $mt={8}>
                            <Field $w={206}><Stepper /><QtyValue>1</QtyValue><Tri $c="#8e8e8e" /></Field>
                            <UnitLabel $ml={10}>Lots</UnitLabel>
                          </InputRow>
                          <Line $mt={11}>Buy margin: ~15 146.77</Line>
                        </QtyCol>
                        <QtyCol>
                          <CheckRow>
                            <CheckBox />
                            Market range
                            <InfoBtn $ml={5}>i</InfoBtn>
                          </CheckRow>
                          <InputRow $mt={10}>
                            <Field $w={202} $h={32} $dim><Stepper dim /></Field>
                            <UnitLabel $ml={13}>Pips</UnitLabel>
                          </InputRow>
                          <Line $mt={13}>Pip value: 1.00 USD</Line>
                        </QtyCol>
                      </QtyGrid>
                      <SlGrid>
                        <SlHead>
                          <CheckRow>
                            <CheckBox><Check size={17} strokeWidth={2} /></CheckBox>
                            Stop loss
                            <ArrowBtn><Ic $s={28} strokeWidth={2}><path d="M3 12h18M17 9l4 3-4 3" /></Ic></ArrowBtn>
                          </CheckRow>
                          <CheckRow>
                            <CheckBox><Check size={17} strokeWidth={2} /></CheckBox>
                            Take profit
                          </CheckRow>
                        </SlHead>
                        {SL_ROWS.map((r) => (
                          <React.Fragment key={r[3]}>
                            <SlField $w={199}>
                              <SlPrefix $w={r[0].length > 1 ? 72 : 29}>{r[0]}</SlPrefix>
                              <SlValue>{r[1]}</SlValue>
                              {r[2] && <SlUnit>{r[2]}</SlUnit>}
                              <Stepper />
                            </SlField>
                            <MidCell>
                              <MidLabel>{r[3]}</MidLabel>
                              <InfoBtn $ml={2}>i</InfoBtn>
                            </MidCell>
                            <SlField $w={200}>
                              <SlPrefix>{r[4]}</SlPrefix>
                              <SlValue>{r[5]}</SlValue>
                              {r[6] && <SlUnit>{r[6]}</SlUnit>}
                              <Stepper />
                            </SlField>
                          </React.Fragment>
                        ))}
                      </SlGrid>
                      <TrailGrid>
                        <TrailRow><CheckBox />Trailing stop loss</TrailRow>
                        <AddTp>+ Add TP</AddTp>
                      </TrailGrid>
                      <CheckRow $mt={24}><CheckBox />Break-even</CheckRow>
                      <CommentBox>
                        Comment
                        <CommentCount>0/100</CommentCount>
                      </CommentBox>
                      <PlaceBtn>Place order</PlaceBtn>
                    </Card>
                  </Section>
                  <DomSection>
                    <DomHead>
                      <Grip $w={8} $h={34} />
                      Depth of market (standard)
                      <DomBtn><ChevronUp size={20} strokeWidth={3} /></DomBtn>
                    </DomHead>
                    <DomGrid>
                      <DomPanel>
                        {DOM.map((d) => (
                          <DomRow key={d[0]}>
                            <DomFill $side="l" $w={d[2]} $c="#ff5000" />
                            <span>{d[0]}</span><span>{d[1]}</span>
                          </DomRow>
                        ))}
                        <DomRow><DomFill $side="l" $w={283} $c="#ff5000" /></DomRow>
                      </DomPanel>
                      <DomPanel>
                        {DOM.map((d) => (
                          <DomRow key={d[0]} $pl={9}>
                            <DomFill $side="r" $w={d[4]} $c="#0d9a4a" />
                            <span>{d[3]}</span><span>{d[0]}</span>
                          </DomRow>
                        ))}
                        <DomRow><DomFill $side="r" $w={281} $c="#0d9a4a" /></DomRow>
                      </DomPanel>
                    </DomGrid>
                  </DomSection>
                </ScrollPane>
                <VBar>
                  <Tri $up $w={13} $c="#7d7d7d" />
                  <VThumb />
                  <Tri $w={13} $c="#7d7d7d" />
                </VBar>
              </RMain>
            </RBody>
          </RightCol>
          <SplitHandle><u /><SideArrowR $w={7} $c="#888" /><u /></SplitHandle>
        </Work>

        <Footer>
          <FootDot />
          Trading sessions: Frankfurt, London, New York
          <FootRight>
            Current time:
            <Utc>UTC+2</Utc>
            <UtcTri><Tri $w={11} $c="#7d7d7d" /></UtcTri>
            <FootTime>15:13 15.05.2026</FootTime>
            <FootSep />
            <OnLabel>ON</OnLabel>
            <Toggle />
            <FootSep />
            50 ms<MsSlash>/</MsSlash>50 ms
          </FootRight>
        </Footer>
      </Main>
    </Root>
  );
}
